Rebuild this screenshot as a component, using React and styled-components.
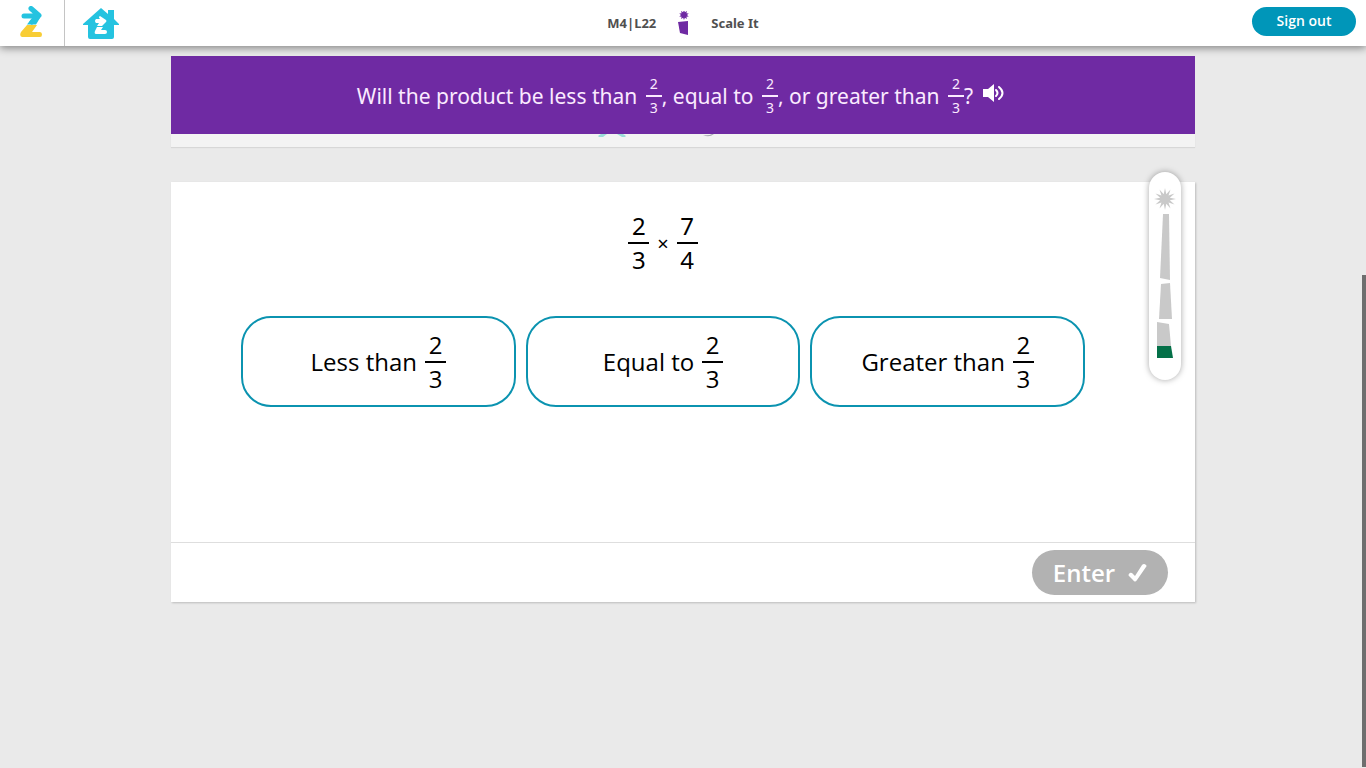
import React from "react";
import styled, { createGlobalStyle } from "styled-components";

const GlobalStyle = createGlobalStyle`
  * {
    box-sizing: border-box;
  }
  body {
    margin: 0;
    background: #eaeaea;
    font-family: "Noto Sans", "Open Sans", sans-serif;
    color: #000;
  }
  button {
    font-family: "Open Sans", "Noto Sans", sans-serif;
    cursor: pointer;
  }
`;

const Page = styled.div`
  position: relative;
  min-height: 100vh;
`;
const Header = styled.header`
  position: relative;
  z-index: 5;
  display: grid;
  grid-template-columns: 1fr auto 1fr;
  height: 46px;
  background: #fff;
  box-shadow: 0 2px 8px rgba(0, 0, 0, 0.45);
`;
const Nav = styled.nav`
  display: flex;
`;
const NavLink = styled.a`
  display: flex;
  align-items: center;
  justify-content: center;
  width: ${(props) => props.$width};
  border-right: ${(props) => (props.$divider ? "1px solid #c4c4c4" : "none")};
`;
const Lesson = styled.div`
  display: flex;
  align-items: center;
  gap: 22px;
  font-size: 13px;
  font-weight: 700;
  color: #505050;
`;
const Account = styled.div`
  display: flex;
  justify-content: flex-end;
  padding: 7px 10px 10px;
`;
const SignOut = styled.button`
  width: 104px;
  padding: 0 0 2px;
  border: 0;
  border-radius: 15px;
  background: #0096b9;
  color: #fff;
  font-size: 14px;
  font-weight: 600;
  line-height: 16px;
`;

const Main = styled.main`
  width: 100%;
  max-width: 1024px;
  margin: 0 auto;
  padding-top: 10px;
`;
const Banner = styled.div`
  display: flex;
  align-items: center;
  justify-content: center;
  gap: 10px;
  min-height: 78px;
  padding: 2px 20px 0 16px;
  background: #6f2aa3;
  color: #fbeaff;
`;
const Question = styled.h1`
  display: flex;
  flex-wrap: wrap;
  align-items: center;
  margin: 0;
  font-size: 21px;
  font-weight: 400;
  white-space: pre-wrap;
`;
const SpeakButton = styled.button`
  display: flex;
  padding: 0 0 6px;
  border: 0;
  background: none;
`;
const Previous = styled.div`
  display: flex;
  justify-content: center;
  height: 13px;
  margin-bottom: 35px;
  background: #f3f3f3;
  box-shadow: 0 1px 1px rgba(0, 0, 0, 0.08);
`;

const Card = styled.section`
  position: relative;
  background: #fff;
  box-shadow: 1px 1px 2px rgba(0, 0, 0, 0.2);
`;
const Body = styled.div`
  min-height: 360px;
  padding: 28px 110px 0 70px;
`;
const Expression = styled.div`
  display: flex;
  align-items: center;
  justify-content: center;
  gap: 8px;
  height: 66px;
  margin-bottom: 40px;
  font-size: 20px;
`;
const Options = styled.div`
  display: grid;
  grid-template-columns: repeat(3, 1fr);
  gap: 10px;
`;
const Option = styled.button`
  display: flex;
  align-items: center;
  justify-content: center;
  gap: 8px;
  height: 91px;
  border: 2px solid #0b93b0;
  border-radius: 30px;
  background: #fff;
  color: #000;
  font-size: 24px;
`;
const Frac = styled.span`
  display: inline-flex;
  flex-direction: column;
  align-items: center;
  width: ${(props) => (props.$small ? "16px" : "21px")};
  margin-left: ${(props) => (props.$small ? "3px" : "0")};
  font-size: ${(props) => (props.$small ? "14px" : "24px")};
  line-height: ${(props) => (props.$small ? "22px" : "32px")};
`;
const Bar = styled.span`
  width: 100%;
  height: 2px;
  background: currentColor;
`;
const Footer = styled.footer`
  display: flex;
  justify-content: flex-end;
  padding: 7px 27px;
  border-top: 1px solid #dedede;
`;
const Enter = styled.button`
  display: flex;
  align-items: center;
  justify-content: center;
  gap: 13px;
  width: 136px;
  height: 45px;
  border: 0;
  border-radius: 23px;
  background: #b2b2b2;
  color: #fff;
  font-size: 24px;
  font-weight: 600;
`;

// floats over the top right corner of the card
const Progress = styled.div`
  position: absolute;
  top: -10px;
  right: 14px;
  width: 32px;
  height: 208px;
  border-radius: 16px;
  background: #fff;
  box-shadow: 0 0 6px rgba(0, 0, 0, 0.35);
`;
const ScrollThumb = styled.div`
  position: absolute;
  top: 275px;
  right: 0;
  bottom: 1px;
  width: 4px;
  background: #6e6e6e;
`;

const Fraction = ({ top, bottom, small }) => (
  <Frac $small={small}>
    <span>{top}</span>
    <Bar />
    <span>{bottom}</span>
  </Frac>
);

const star = (cx, cy, outer, inner, points) =>
  Array.from({ length: points * 2 }, (_, i) => {
    const r = i % 2 ? inner : outer;
    const a = (i * Math.PI) / points - Math.PI / 2;
    return `${cx + r * Math.cos(a)},${cy + r * Math.sin(a)}`;
  }).join(" ");

const Logo = () => (
  <svg width="24" height="34" viewBox="0 0 24 34">
    <path d="M7 19H17L12 26H20Q22 26 22 28.500Q22 31 20 31H2Q-1 30 1 26Z" fill="#f8cd35" />
    <path
      d="M4 10H18M11 2.500L19 9.500L12 16"
      fill="none"
      stroke="#25c3e0"
      strokeWidth="5"
      strokeLinecap="round"
      strokeLinejoin="round"
    />
    <path d="M12 12L20 12L16 18.500H7Z" fill="#25c3e0" />
  </svg>
);

const HomeIcon = () => (
  <svg width="36" height="31" viewBox="0 0 36 31">
    <path d="M18 0L25 6V2H31V11L36 16V17H31V29Q31 31 29 31H7Q5 31 5 29V17H0V16Z" fill="#25c3e0" />
    <path d="M14 19H20L18 22H22Q24 22 24 24Q24 26 22 26H13Q11 26 12 23Z" fill="#fff" />
    <path d="M17 8L23 12Q24 13 23 14L19 18H14L16 15H13Q11 13 13 11H17Q15 9 17 8Z" fill="#fff" />
  </svg>
);

const LessonIcon = () => (
  <svg width="11" height="24" viewBox="0 0 11 24" fill="#6f2aa3">
    <polygon points={star(6, 4, 5, 3, 10)} />
    <path d="M0 11L10 10V24L2 22Z" />
  </svg>
);

const SpeakerIcon = () => (
  <svg width="22" height="18" viewBox="0 0 22 18">
    <path d="M0 5H5L11 0V18L5 13H0Z" fill="#fff" />
    <path d="M13 6Q16 9 13 12M16 3Q23 9 16 15" fill="none" stroke="#fff" strokeWidth="2" strokeLinecap="round" />
  </svg>
);

const CheckIcon = () => (
  <svg width="19" height="19" viewBox="0 0 19 19" fill="#fff">
    <path d="M1 11Q2 9 4 10L7 13L14 2Q16 0 18 2Q19 3 18 4L9 17Q7 20 5 17L1 13Q0 12 1 11Z" />
  </svg>
);

const ProgressIcon = () => (
  <svg width="32" height="208" viewBox="0 0 32 208" fill="#c9c9c9">
    <polygon points={star(16, 27, 11, 5, 12)} />
    <path d="M14 42H20L21 108L11 106Z" />
    <path d="M12 112L21 111L23 147H10Z" />
    <path d="M8 150L20 152L22 174H8Z" />
    <path d="M8 174H22L24 186H8Z" fill="#047048" />
  </svg>
);

const App = () => {
  return (
    <Page>
      <GlobalStyle />
      <Header>
        <Nav>
          <NavLink href="#" aria-label="Zearn" $width="65px" $divider>
            <Logo />
          </NavLink>
          <NavLink href="#" aria-label="Home" $width="72px">
            <HomeIcon />
          </NavLink>
        </Nav>
        <Lesson>
          <span>M4|L22</span>
          <LessonIcon />
          <span>Scale It</span>
        </Lesson>
        <Account>
          <SignOut>Sign out</SignOut>
        </Account>
      </Header>
      <Main>
        <Banner>
          <Question>
            <span>Will the product be less than </span>
            <Fraction small top="2" bottom="3" />
            <span>, equal to </span>
            <Fraction small top="2" bottom="3" />
            <span>, or greater than </span>
            <Fraction small top="2" bottom="3" />
            <span>?</span>
          </Question>
          <SpeakButton aria-label="Read aloud">
            <SpeakerIcon />
          </SpeakButton>
        </Banner>
        <Previous>
          <svg width="170" height="4" viewBox="0 0 170 4">
            <path d="M0 2L3 0H9L5 3H1ZM19 0H25L28 2L27 3H24Z" fill="#9addd8" />
            <path d="M105 0H116Q111 4 105 1Q111 2 114 0Z" fill="#a7a7b2" />
          </svg>
        </Previous>
        <Card>
          <Body>
            <Expression>
              <Fraction top="2" bottom="3" />
              <span>×</span>
              <Fraction top="7" bottom="4" />
            </Expression>
            <Options>
              <Option>
                Less than <Fraction top="2" bottom="3" />
              </Option>
              <Option>
                Equal to <Fraction top="2" bottom="3" />
              </Option>
              <Option>
                Greater than <Fraction top="2" bottom="3" />
              </Option>
            </Options>
          </Body>
          <Footer>
            <Enter>
              Enter <CheckIcon />
            </Enter>
          </Footer>
          <Progress>
            <ProgressIcon />
          </Progress>
        </Card>
      </Main>
      <ScrollThumb />
    </Page>
  );
};

export default App;
